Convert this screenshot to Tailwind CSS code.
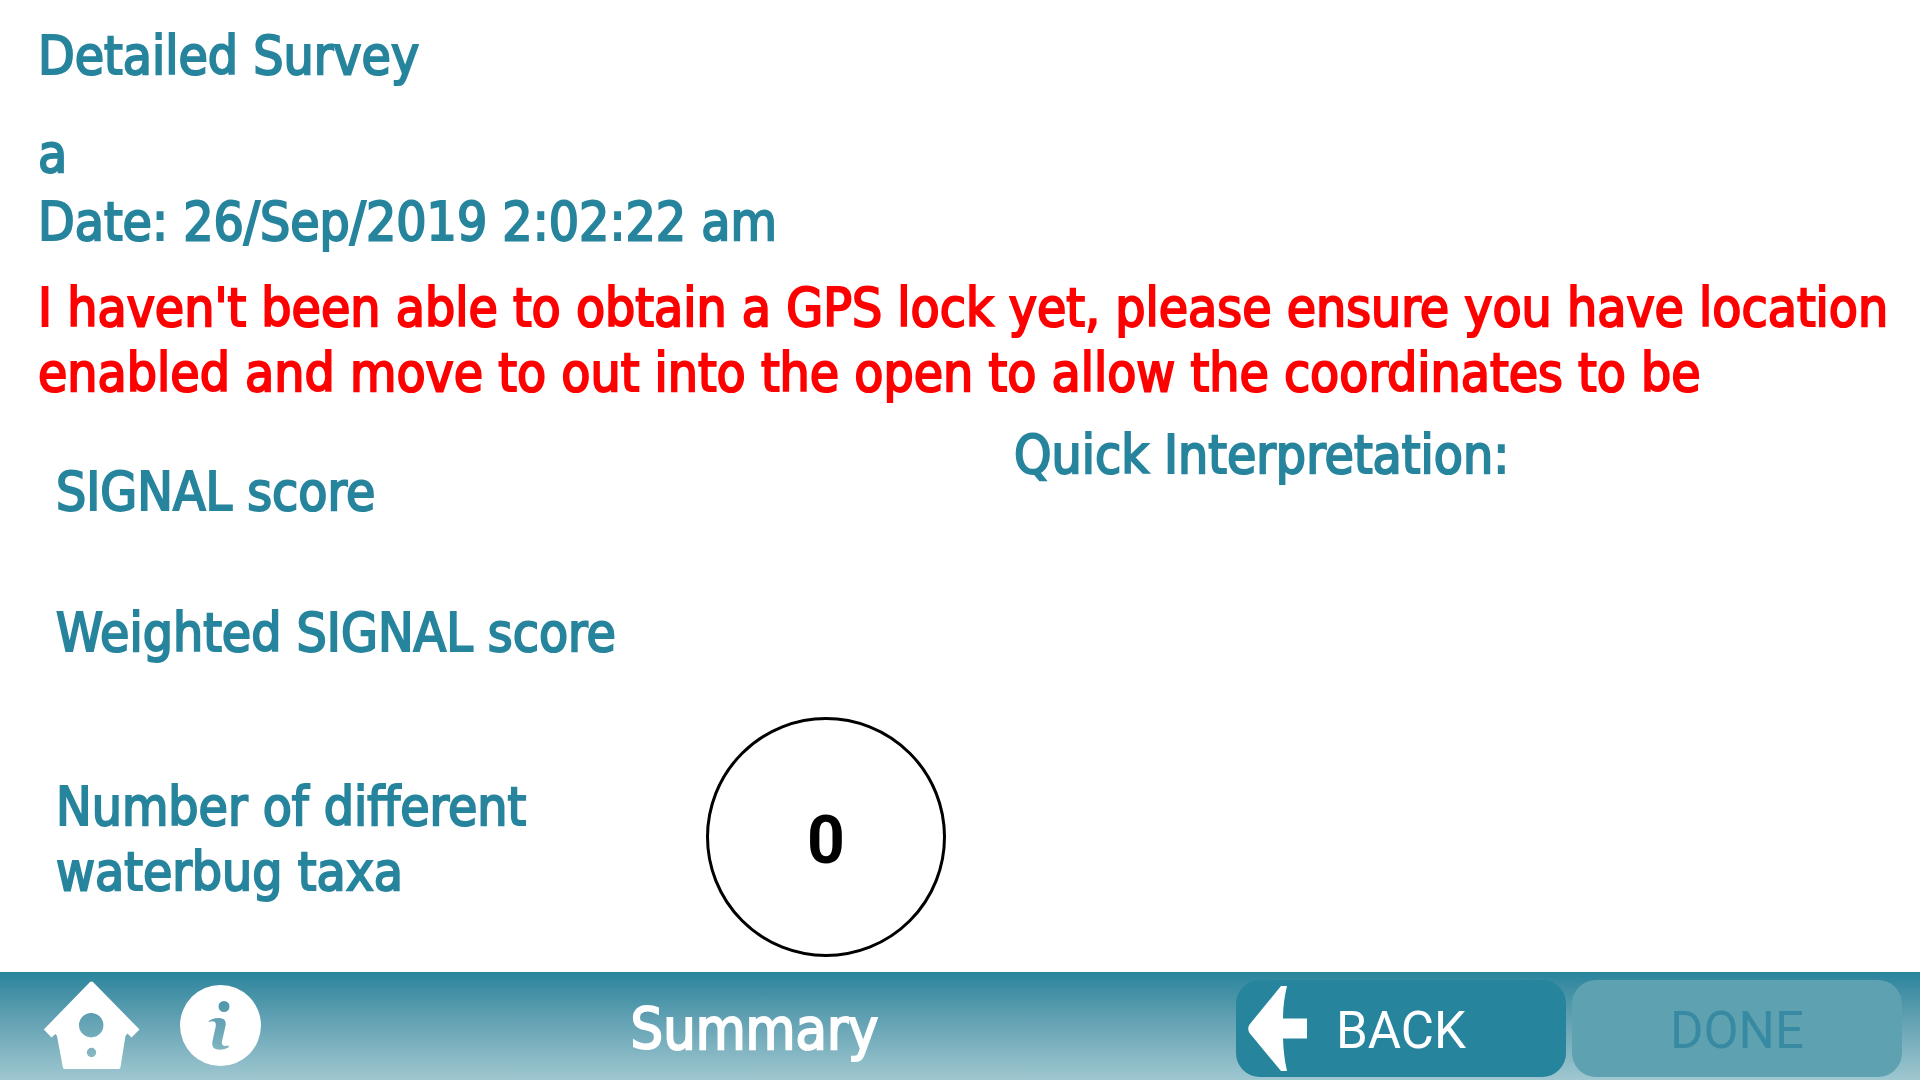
<!DOCTYPE html>
<html lang="en">
<head>
<meta charset="utf-8">
<meta name="viewport" content="width=device-width, initial-scale=1">
<title>Detailed Survey - Summary</title>
<script src="https://cdn.jsdelivr.net/npm/@tailwindcss/browser@4"></script>
</head>
<body class="flex min-h-screen flex-col bg-white font-['DejaVu_Sans_Condensed','DejaVu_Sans',sans-serif] text-[53px] leading-[65px] text-[#27849d] [-webkit-text-stroke:2px]">
  <header class="pt-[23px] pr-4 pl-[38px]">
    <h1>Detailed Survey</h1>
    <p class="mt-[33px]">a</p>
    <p class="mt-[3px]">Date: 26/Sep/2019 2:02:22 am</p>
    <p class="mt-[21px] text-[#ff0000]" role="alert">I haven't been able to obtain a GPS lock yet, please ensure you have location enabled and move to out into the open to allow the coordinates to be</p>
  </header>

  <main class="grid flex-1 grid-cols-[958fr_906fr] pl-14">
    <section class="pt-[54px]">
      <h2>SIGNAL score</h2>
      <h2 class="mt-[76px]">Weighted SIGNAL score</h2>
      <div class="mt-[52px] flex">
        <h2 class="w-[650px] pt-[57px]">Number of different<br>waterbug taxa</h2>
        <div class="flex size-60 items-center justify-center rounded-full border-3 border-black pt-[6px] font-['Roboto',sans-serif] text-[66px] font-bold text-black [-webkit-text-stroke:0]">0</div>
      </div>
    </section>
    <section class="pt-[17px]">
      <h2>Quick Interpretation:</h2>
    </section>
  </main>

  <footer class="flex h-[108px] items-center bg-linear-to-b from-[#27849c] to-[#9fc7d0] pr-[18px] pb-0.5 pl-[43px] text-white">
    <a href="#home" aria-label="Home">
      <svg class="h-[88px] w-[97px]" viewBox="0 0 97 88" fill="currentColor" fill-rule="evenodd">
        <path d="M46.5 1.5Q48.500 -.3 50.500 1.500L96.500 48.500L88.500 56.500L84.500 52.500L82.500 55L77.500 86Q77.300 88 75.500 88H21.500Q20 88 19.800 86L14 55L12.500 53L8.500 56.500L.8 48.500ZM48.200 32a12.200 12.200 0 1 0 0 24.400a12.200 12.200 0 1 0 0-24.400ZM48.500 66.800a4.700 4.700 0 1 0 0 9.400a4.700 4.700 0 1 0 0-9.400Z"/>
      </svg>
    </a>
    <a href="#info" aria-label="Information" class="ml-10">
      <svg class="size-[81px]" viewBox="0 0 81 81" fill="currentColor" fill-rule="evenodd">
        <path d="M40.500 0a40.500 40.500 0 1 0 0 81a40.500 40.500 0 1 0 0-81ZM44 16a5.500 5.500 0 1 1 0 11a5.500 5.500 0 1 1 0-11ZM28.500 36.600C31 34 35 32.800 39 33C44.500 33.200 46.500 36 45.500 41L42 56C41.300 60 42.500 61.700 48.700 60.500V62.300C46 64.300 42 64.800 38.500 64.600C33.500 64.300 31.500 61.500 32.500 56L35.700 41.500C36.300 38 35 36.300 33 36.300C31.500 36.300 30 36.500 28.500 37Z"/>
      </svg>
    </a>
    <h2 class="flex-1 pt-2 pl-3 text-center text-[57px]">Summary</h2>
    <div class="flex gap-[6px] pt-1.5 font-['Roboto',sans-serif] text-[51px] [-webkit-text-stroke:0]">
      <button type="button" class="flex h-[97px] w-[330px] items-center rounded-3xl bg-[#27849d] px-3">
        <svg class="h-[85px] w-[59px]" viewBox="0 0 59 85" fill="currentColor" aria-hidden="true">
          <path d="M33 0H39Q35 16 35 32.500H59V52.500H35Q35.500 70 39 85H33L1.500 47Q-1 42.500 1.500 38.500Z"/>
        </svg>
        <span class="flex-1 pt-1 pr-[59px] text-center">BACK</span>
      </button>
      <button type="button" disabled class="h-[97px] w-[330px] rounded-3xl bg-[#5ea2b2] pt-1 text-[#378aa1]">DONE</button>
    </div>
  </footer>
</body>
</html>
